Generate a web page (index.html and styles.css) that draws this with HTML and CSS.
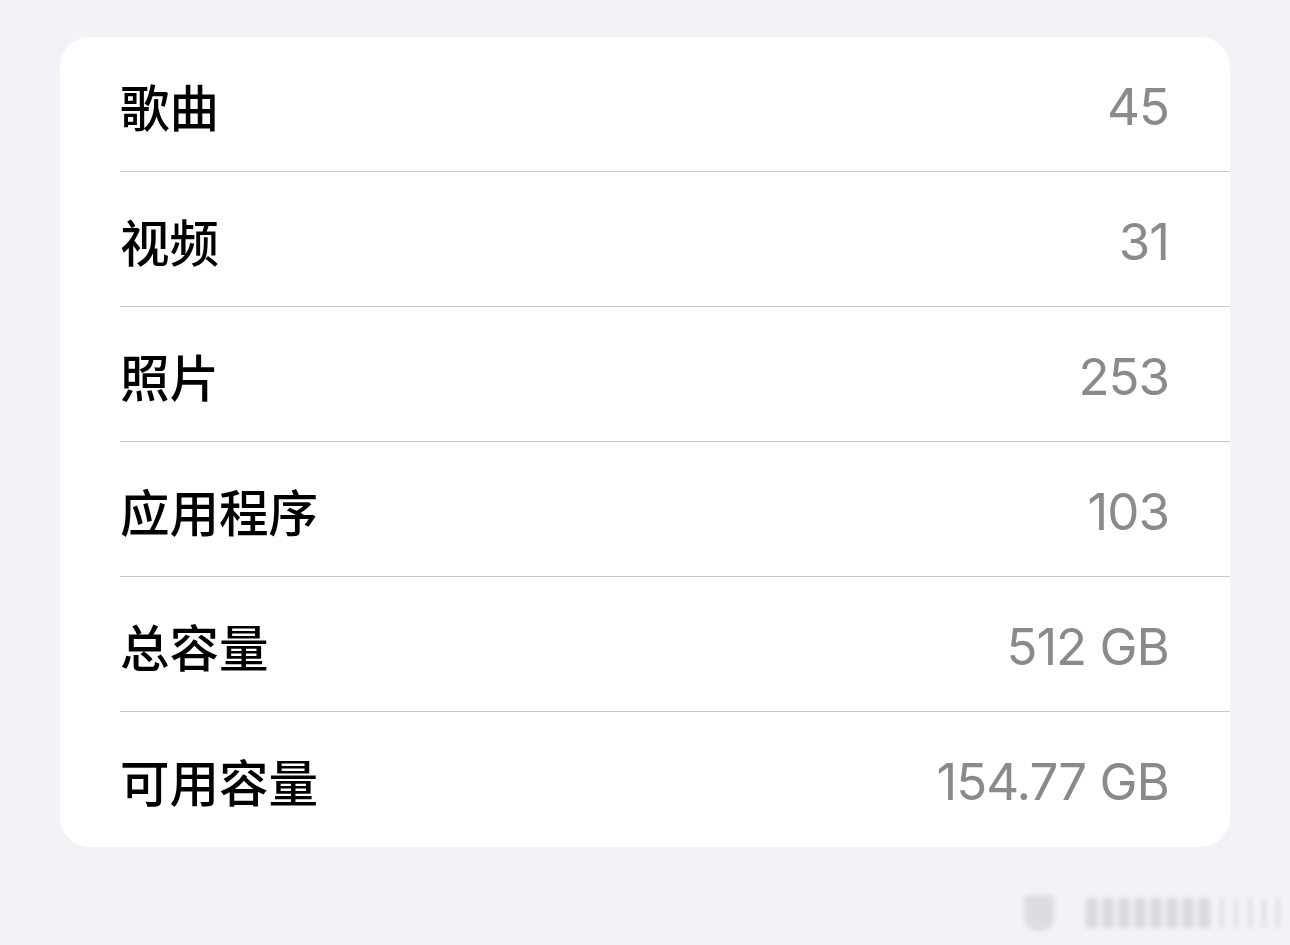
FILE: index.html
```html
<!DOCTYPE html>
<html lang="zh-CN">
<head>
  <meta charset="UTF-8">
  <title>关于本机</title>
  <link rel="stylesheet" href="styles.css">
</head>
<body>

  <div class="card">
    <div class="row">
      <span class="label">歌曲</span>
      <span class="value">45</span>
    </div>
    <div class="row">
      <span class="label">视频</span>
      <span class="value">31</span>
    </div>
    <div class="row">
      <span class="label">照片</span>
      <span class="value">253</span>
    </div>
    <div class="row">
      <span class="label">应用程序</span>
      <span class="value">103</span>
    </div>
    <div class="row">
      <span class="label">总容量</span>
      <span class="value">512 GB</span>
    </div>
    <div class="row">
      <span class="label">可用容量</span>
      <span class="value">154.77 GB</span>
    </div>
  </div>

  <div class="watermark">
    <span class="mark mark-logo"></span>
    <span class="mark"></span>
    <span class="mark"></span>
    <span class="mark"></span>
    <span class="mark"></span>
    <span class="mark"></span>
    <span class="mark"></span>
    <span class="mark"></span>
    <span class="mark"></span>
    <span class="mark thin"></span>
    <span class="mark thin"></span>
    <span class="mark thin"></span>
    <span class="mark thin"></span>
    <span class="mark thin"></span>
  </div>

</body>
</html>
```

FILE: styles.css
```css
* {
  margin: 0;
  padding: 0;
  box-sizing: border-box;
}

body {
  font-family: "Inter", "Noto Sans CJK SC", sans-serif;
  background: #f2f2f7;
  width: 1290px;
  height: 945px;
  overflow: hidden;
  padding-top: 37px;
}

.card {
  margin: 0 60px;
  background: #ffffff;
  border-radius: 30px;
  padding-left: 60px;
  overflow: hidden;
}

.row {
  display: flex;
  align-items: center;
  justify-content: space-between;
  height: 135px;
  padding-right: 61px;
  border-bottom: 1px solid #c8c8cc;
}

.row:last-child {
  border-bottom: none;
}

.label {
  font-family: "Noto Sans CJK SC", sans-serif;
  font-size: 49.5px;
  font-weight: 500;
  color: #000000;
  padding-top: 2px;
}

.value {
  font-family: "Inter", "Liberation Sans", sans-serif;
  font-size: 51px;
  color: #8a8a8e;
  padding-top: 4px;
  letter-spacing: -1px;
}

.watermark {
  display: flex;
  justify-content: flex-end;
  align-items: center;
  gap: 4px;
  padding: 48px 10px 0 0;
  filter: blur(2px);
}

.mark {
  width: 12px;
  height: 30px;
  background: #d9d9df;
  border-radius: 2px;
}

.mark.thin {
  width: 4px;
  margin-left: 6px;
  background: #e0e0e6;
}

.mark-logo {
  width: 30px;
  height: 36px;
  margin-right: 28px;
  background: #dcdce2;
  border-radius: 4px 4px 14px 14px;
}
```
